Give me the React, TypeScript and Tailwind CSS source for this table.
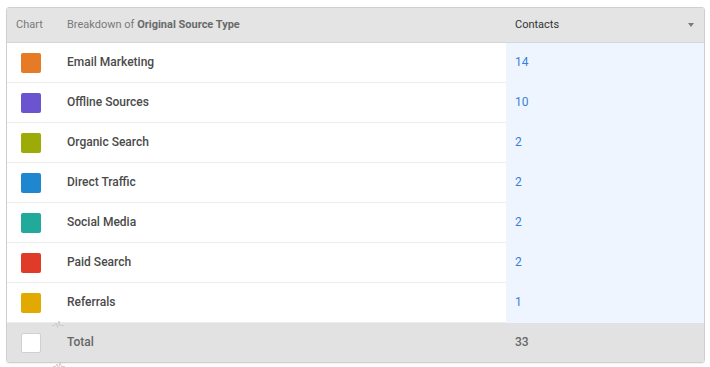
import React from "react";

const rows = [
  { label: "Email Marketing", value: 14, color: "bg-[#e57b24]" },
  { label: "Offline Sources", value: 10, color: "bg-[#6a54cf]" },
  { label: "Organic Search", value: 2, color: "bg-[#9cab05]" },
  { label: "Direct Traffic", value: 2, color: "bg-[#1f87cf]" },
  { label: "Social Media", value: 2, color: "bg-[#21a99b]" },
  { label: "Paid Search", value: 2, color: "bg-[#e03a29]" },
  { label: "Referrals", value: 1, color: "bg-[#e2aa00]" },
];

function Pulse({ className }: { className?: string }) {
  return (
    <svg className={className} width="12" height="9" viewBox="0 0 12 9" fill="none">
      <path d="M0 5.5h2.5l1.5-2.5 1.5 4.5 1.5-6.5 1.2 4.5h3.8" stroke="#cacaca" strokeWidth="0.9" />
    </svg>
  );
}

export default function App() {
  return (
    <div className="w-[710px] h-[367px] bg-white pt-[7px] pl-[6px] font-['Roboto','Liberation_Sans',sans-serif] relative">
      <div className="w-[699px] border border-[#cfcfcf] rounded-[3px] overflow-hidden shadow-[0_1px_1px_rgba(0,0,0,0.06)]">
        {/* Header */}
        <div className="flex h-[35px] bg-[#e4e4e4] border-b border-[#d6d6d6] items-center text-[11px] text-[#7a7a7a]">
          <div className="w-[53px] pl-[9px]">Chart</div>
          <div className="w-[446px] pl-[7px]">
            Breakdown of <span className="font-bold text-[#6a6a6a]">Original Source Type</span>
          </div>
          <div className="w-[198px] pl-[9px] pr-[10px] flex items-center justify-between text-[#333]">
            <span>Contacts</span>
            <span className="w-0 h-0 border-l-[3.5px] border-r-[3.5px] border-t-[4px] border-l-transparent border-r-transparent border-t-[#7a7a7a]" />
          </div>
        </div>
        {/* Rows */}
        {rows.map((r) => (
          <div key={r.label} className="flex h-[40px] items-stretch">
            <div className="w-[53px] pl-[14px] flex items-center border-b border-[#ececec]">
              <div className={`w-[20px] h-[20px] rounded-[2px] ${r.color}`} />
            </div>
            <div className="w-[446px] pl-[7px] pb-[2px] flex items-center border-b border-[#ececec] text-[12px] font-medium text-[#4a4a4a]">
              {r.label}
            </div>
            <div className="w-[198px] pl-[9px] pb-[2px] flex items-center bg-[#eef5fe] text-[12px] text-[#3a7fd8]">
              {r.value}
            </div>
          </div>
        ))}
        {/* Total */}
        <div className="flex h-[39px] items-center bg-[#e2e2e2] text-[12px] font-medium text-[#666]">
          <div className="w-[53px] pl-[14px] flex items-center">
            <div className="w-[20px] h-[20px] rounded-[2px] bg-white border border-[#d0d0d0]" />
          </div>
          <div className="w-[446px] pl-[7px] pb-[2px]">Total</div>
          <div className="w-[198px] pl-[9px] pb-[2px]">33</div>
        </div>
      </div>
      <Pulse className="absolute left-[52px] top-[320px]" />
      <Pulse className="absolute left-[53px] top-[361px]" />
    </div>
  );
}
